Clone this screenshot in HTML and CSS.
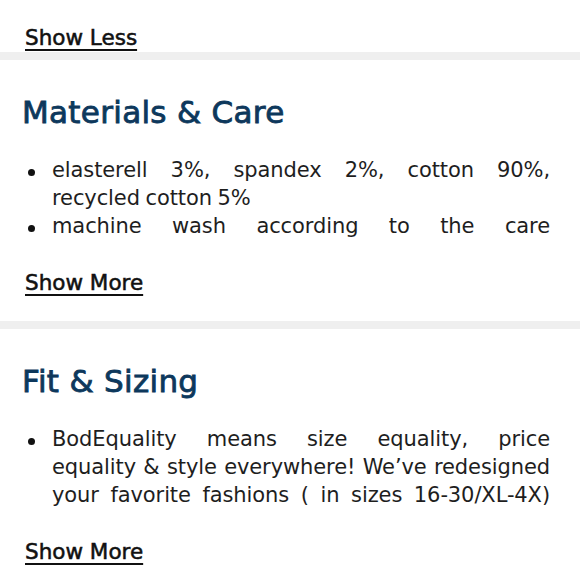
FILE: index.html
```html
<!DOCTYPE html>
<html lang="en">
<head>
<meta charset="utf-8">
<title>Product details</title>
<link rel="stylesheet" href="styles.css">
</head>
<body>
  <div class="toggle-top"><a class="toggle" href="#">Show Less</a></div>
  <div class="band"></div>

  <section class="panel">
    <h2 class="panel-title">Materials &amp; Care</h2>
    <div class="clamp">
      <ul class="bullets">
        <li>elasterell 3%, spandex 2%, cotton 90%, recycled&nbsp;cotton&nbsp;5%</li>
        <li>machine wash according to the care instructions on the label</li>
        <li>imported</li>
      </ul>
    </div>
    <a class="toggle" href="#">Show More</a>
  </section>
  <div class="band"></div>

  <section class="panel">
    <h2 class="panel-title">Fit &amp; Sizing</h2>
    <div class="clamp">
      <ul class="bullets">
        <li>BodEquality means size equality, price equality&nbsp;&amp; style everywhere! We’ve redesigned your favorite fashions ( in sizes 16-30/XL-4X) specifically to fit and flatter real curves.</li>
      </ul>
    </div>
    <a class="toggle" href="#">Show More</a>
  </section>
</body>
</html>
```
FILE: styles.css
```css
html, body {
  margin: 0;
  padding: 0;
  background: #ffffff;
}

body {
  font-family: "DejaVu Sans", "Liberation Sans", sans-serif;
  color: #1e1e1e;
}

.toggle {
  display: inline-block;
  font-size: 21.5px;
  line-height: 26px;
  color: #111111;
  -webkit-text-stroke: 0.55px #111111;
  text-decoration: underline;
  text-decoration-thickness: 2px;
  text-underline-offset: 4px;
}

.toggle-top {
  padding: 25px 0 0 25px;
  height: 26px;
  margin-bottom: 1px;
}

.band {
  height: 8px;
  background: #efefef;
}

.panel {
  padding: 34px 30px 25px 25px;
}

.panel-title {
  margin: 0 0 26px -3px;
  font-size: 31px;
  line-height: 36px;
  font-weight: normal;
  letter-spacing: 0.3px;
  color: #0d385c;
  -webkit-text-stroke: 0.85px #0d385c;
}

.clamp {
  max-height: 84px;
  overflow: hidden;
  margin-bottom: 30px;
}

.bullets {
  margin: 0;
  padding: 0 0 0 27px;
  list-style: none;
  font-size: 21px;
  line-height: 28px;
  letter-spacing: -0.1px;
  word-spacing: -1px;
  text-align: justify;
}

.bullets li::before {
  content: "";
  display: inline-block;
  width: 7px;
  height: 7px;
  border-radius: 50%;
  background: #111111;
  margin-left: -24px;
  margin-right: 17px;
  vertical-align: 1px;
}
```
